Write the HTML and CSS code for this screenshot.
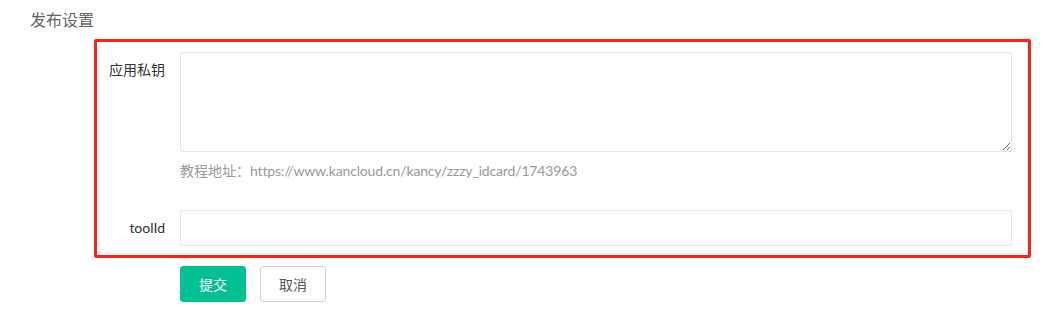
FILE: index.html
```html
<!DOCTYPE html>
<html lang="zh-CN">
<head>
<meta charset="utf-8">
<title>发布设置</title>
<link rel="stylesheet" href="styles.css">
</head>
<body>
<div class="page">
  <div class="title">发布设置</div>
  <div class="panel">
    <div class="row">
      <label class="label">应用私钥</label>
      <div class="field">
        <textarea class="textarea"></textarea>
        <div class="aux">教程地址：<span class="url">https://www.kancloud.cn/kancy/zzzy_idcard/1743963</span></div>
      </div>
    </div>
    <div class="row row-input">
      <label class="label">toolId</label>
      <div class="field">
        <input class="input" type="text">
      </div>
    </div>
  </div>
  <div class="actions">
    <button class="btn btn-primary">提交</button>
    <button class="btn btn-default">取消</button>
  </div>
</div>
</body>
</html>
```

FILE: styles.css
```css
* { box-sizing: border-box; }
html, body { margin: 0; padding: 0; background: #fff; }
body {
  font-family: Lato, "Noto Sans CJK SC", sans-serif;
  font-size: 14px;
  color: #333;
}
.page { padding: 10px 30px; }
.title {
  font-size: 16px;
  line-height: 20px;
  color: #666;
}
.panel {
  margin-top: 9px;
  margin-left: 64px;
  width: 937px;
  border: 3px solid #fe2216;
  border-radius: 2px;
  padding: 10px 16px 9px 0;
}
.row { display: flex; }
.row-input { margin-top: 29px; }
.label {
  width: 83px;
  flex: none;
  padding: 8px 15px 0 0;
  text-align: right;
  line-height: 20px;
  color: #333;
}
.field { flex: 1; }
.textarea {
  display: block;
  width: 832px;
  height: 100px;
  border: 1px solid #e6e6e6;
  border-radius: 2px;
  margin: 0;
  resize: both;
  font: inherit;
}
.aux {
  margin-top: 9px;
  line-height: 20px;
  color: #999;
}
.url { letter-spacing: -0.16px; }
.input {
  display: block;
  width: 832px;
  height: 36px;
  border: 1px solid #e6e6e6;
  border-radius: 2px;
  margin: 0;
  font: inherit;
}
.actions {
  margin-top: 8px;
  margin-left: 150px;
  display: flex;
  gap: 14px;
}
.btn {
  width: 66px;
  height: 36px;
  border-radius: 3px;
  font-family: "Noto Sans CJK SC", sans-serif;
  font-size: 14px;
  padding: 0;
  line-height: 34px;
}
.btn-primary {
  background: #01c193;
  border: 1px solid #01c193;
  color: #fff;
}
.btn-default {
  background: #fff;
  border: 1px solid #d2d2d2;
  color: #555;
}
```
